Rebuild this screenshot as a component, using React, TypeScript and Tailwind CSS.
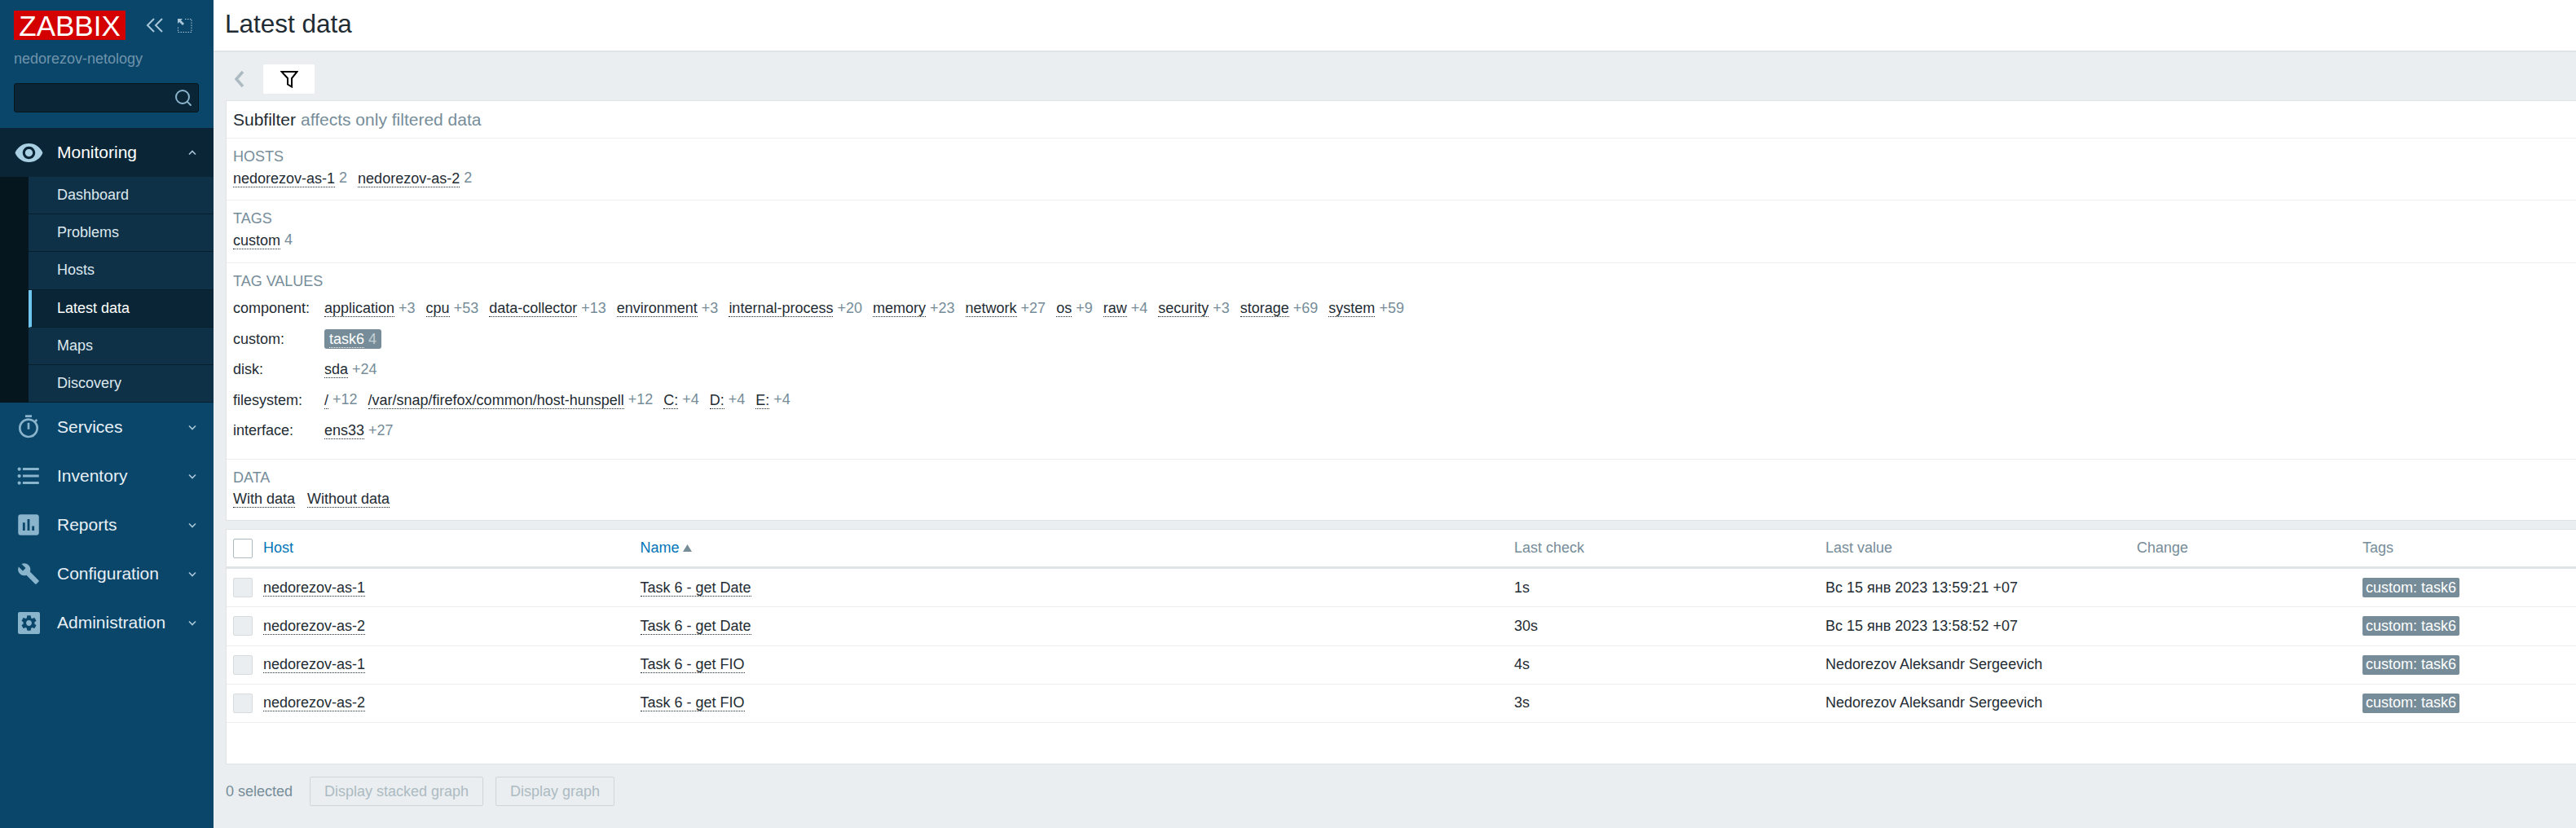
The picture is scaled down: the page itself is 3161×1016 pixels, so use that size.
import { Search } from "lucide-react";
import type { ReactNode } from "react";
import {
  MdAssessment,
  MdBuild,
  MdFormatListBulleted,
  MdOutlineTimer,
  MdRemoveRedEye,
  MdSettings,
} from "react-icons/md";

const submenu = ["Dashboard", "Problems", "Hosts", "Latest data", "Maps", "Discovery"];

const tagValues: { label: string; items: [string, string][] }[] = [
  {
    label: "component:",
    items: [
      ["application", "+3"],
      ["cpu", "+53"],
      ["data-collector", "+13"],
      ["environment", "+3"],
      ["internal-process", "+20"],
      ["memory", "+23"],
      ["network", "+27"],
      ["os", "+9"],
      ["raw", "+4"],
      ["security", "+3"],
      ["storage", "+69"],
      ["system", "+59"],
    ],
  },
  { label: "custom:", items: [] },
  { label: "disk:", items: [["sda", "+24"]] },
  {
    label: "filesystem:",
    items: [
      ["/", "+12"],
      ["/var/snap/firefox/common/host-hunspell", "+12"],
      ["C:", "+4"],
      ["D:", "+4"],
      ["E:", "+4"],
    ],
  },
  { label: "interface:", items: [["ens33", "+27"]] },
];

const rows = [
  ["nedorezov-as-1", "Task 6 - get Date", "1s", "Вс 15 янв 2023 13:59:21 +07"],
  ["nedorezov-as-2", "Task 6 - get Date", "30s", "Вс 15 янв 2023 13:58:52 +07"],
  ["nedorezov-as-1", "Task 6 - get FIO", "4s", "Nedorezov Aleksandr Sergeevich"],
  ["nedorezov-as-2", "Task 6 - get FIO", "3s", "Nedorezov Aleksandr Sergeevich"],
];

const gridCols = "grid grid-cols-[45px_462.5px_1072.5px_382px_382px_277px_1fr] items-center";

function Chevron({ up }: { up?: boolean }) {
  return (
    <svg width="10" height="7" viewBox="0 0 10 7" className="ml-auto mr-[21px]" fill="none" stroke="#a9c6d8" strokeWidth="1.6">
      <path d={up ? "M1 5.5 5 1.5 9 5.5" : "M1 1.5 5 5.5 9 1.5"} />
    </svg>
  );
}

function MenuRow({ icon, label, open }: { icon: ReactNode; label: string; open?: boolean }) {
  return (
    <div className={`flex h-[60px] items-center text-[21px] ${open ? "bg-[#0a2636] text-white" : "text-[#e8f0f5]"}`}>
      <div className={`flex w-[70px] justify-center ${open ? "text-[#a9cfe3]" : "text-[#8ab3cc]"}`}>{icon}</div>
      <span>{label}</span>
      <Chevron up={open} />
    </div>
  );
}

function Sub({ name, count }: { name: string; count: string }) {
  return (
    <span className="mr-[13px] inline-flex items-center gap-[5px] whitespace-nowrap">
      <span className="border-b border-dotted border-[#1f2c33] leading-[20px]">{name}</span>
      <span className="pb-px text-[#768d99]">{count}</span>
    </span>
  );
}

function Section({ title, children, h }: { title: string; children: ReactNode; h: string }) {
  return (
    <div className={`border-t border-[#ebeef0] px-[8px] pt-[11px] ${h}`}>
      <div className="flex h-[22px] items-center text-[#768d99]">{title}</div>
      {children}
    </div>
  );
}

export default function App() {
  return (
    <div className="flex h-screen overflow-hidden bg-[#ebeef0] text-[18px] text-[#1f2c33] [font-family:'Liberation_Sans',Arial,sans-serif]">
      <aside className="w-[262px] shrink-0 bg-[#0a466a]">
        <div className="h-[157px] px-[17px] pt-[13px]">
          <div className="flex items-center">
            <div className="flex h-[36px] w-[137px] items-center justify-center bg-[#d40000] text-[35px] leading-none text-white">ZABBIX</div>
            <svg width="22" height="18" viewBox="0 0 22 18" className="ml-[25px]" fill="none" stroke="#a9c6d8" strokeWidth="2">
              <path d="M10 1 2 9l8 8M20 1l-8 8 8 8" />
            </svg>
            <svg width="19" height="19" viewBox="0 0 19 19" className="ml-[16px]" fill="none" stroke="#a9c6d8">
              <path d="M10 1.5h8v16H1.5V10" strokeDasharray="1.5 1.5" />
              <path d="M1 1h6L5 3l4 4-2 2-4-4-2 2z" fill="#a9c6d8" stroke="none" />
            </svg>
          </div>
          <div className="mt-[11px] h-[24px] leading-[24px] text-[#6f93aa]">nedorezov-netology</div>
          <div className="mt-[18px] flex h-[36px] w-[227px] items-center justify-end rounded-[3px] border border-[#05161f] bg-[#0a2636] pr-[6px]">
            <Search size={24} strokeWidth={2} className="text-[#8ab3cc]" />
          </div>
        </div>
        <MenuRow icon={<MdRemoveRedEye size={37} />} label="Monitoring" open />
        <div className="bg-[#05161f] pl-[35px]">
          {submenu.map((item) => {
            const active = item === "Latest data";
            return (
              <div
                key={item}
                className={`flex h-[46.2px] items-center border-b border-[#071e2c] text-[18px] ${
                  active ? "border-l-[4px] border-l-[#6ec5ee] bg-[#0a2636] pl-[31px] text-white" : "bg-[#0f3148] pl-[35px] text-[#dde8ee]"
                }`}
              >
                {item}
              </div>
            );
          })}
        </div>
        <MenuRow icon={<MdOutlineTimer size={32} />} label="Services" />
        <MenuRow icon={<MdFormatListBulleted size={34} />} label="Inventory" />
        <MenuRow icon={<MdAssessment size={34} />} label="Reports" />
        <MenuRow icon={<MdBuild size={28} />} label="Configuration" />
        <MenuRow
          icon={
            <div className="flex h-[27px] w-[27px] items-center justify-center rounded-[2px] bg-[#8ab3cc] text-[#0a466a]">
              <MdSettings size={23} />
            </div>
          }
          label="Administration"
        />
      </aside>

      <main className="min-w-0 flex-1">
        <header className="flex h-[64px] items-center border-b-2 border-[#dfe4e7] bg-white pb-[2px] pl-[14px]">
          <h1 className="text-[31.5px] leading-none">Latest data</h1>
        </header>

        <div className="pl-[15px]">
          <div className="flex h-[59px] items-start pt-[15px]">
            <svg width="14" height="22" viewBox="0 0 14 22" className="ml-[10px] mt-[7px]" fill="none" stroke="#acbbc2" strokeWidth="3.5">
              <path d="M11 2 3 11l8 9" />
            </svg>
            <div className="ml-[22px] flex h-[36px] w-[63px] items-center justify-center rounded-[2px] bg-white">
              <svg width="22" height="22" viewBox="0 0 22 22" fill="none" stroke="#000" strokeWidth="2">
                <path d="M1.5 2h19L14 10v10.5l-5-3V10z" />
              </svg>
            </div>
          </div>

          <section className="h-[516px] border border-r-0 border-[#dfe4e7] bg-white">
            <div className="flex h-[45px] items-center whitespace-nowrap px-[8px] text-[21px]">
              Subfilter
              <span className="ml-[6px] text-[#768d99]">affects only filtered data</span>
            </div>
            <Section title="HOSTS" h="h-[76px]">
              <div className="mt-[2px]">
                <Sub name="nedorezov-as-1" count="2" />
                <Sub name="nedorezov-as-2" count="2" />
              </div>
            </Section>
            <Section title="TAGS" h="h-[77px]">
              <div className="mt-[2px]">
                <Sub name="custom" count="4" />
              </div>
            </Section>
            <Section title="TAG VALUES" h="h-[241px]">
              <div className="mt-[4px]">
                {tagValues.map((row) => (
                  <div key={row.label} className="flex h-[37.5px] items-center">
                    <div className="w-[112px] shrink-0">{row.label}</div>
                    {row.items.map(([name, count]) => (
                      <Sub key={name} name={name} count={count} />
                    ))}
                    {row.label === "custom:" && (
                      <span className="inline-flex h-[24px] items-center gap-[5px] rounded-[3px] bg-[#768d99] px-[6px] text-white">
                        <span className="border-b border-dotted border-white leading-[20px]">task6</span>
                        <span className="text-[#c4cfd5]">4</span>
                      </span>
                    )}
                  </div>
                ))}
              </div>
            </Section>
            <Section title="DATA" h="h-[75px]">
              <div className="mt-[2px]">
                <span className="mr-[15px] inline-block border-b border-dotted border-[#1f2c33] leading-[20px]">With data</span>
                <span className="inline-block border-b border-dotted border-[#1f2c33] leading-[20px]">Without data</span>
              </div>
            </Section>
          </section>

          <section className="mt-[10px] h-[289px] border border-r-0 border-[#dfe4e7] bg-white">
            <div className={`${gridCols} h-[48px] border-b-[3px] border-[#dfe4e7] text-[#768d99]`}>
              <div className="pl-[8px]">
                <div className="h-[24px] w-[24px] rounded-[2px] border border-[#acbbc2] bg-white" />
              </div>
              <span className="text-[#0275b8]">Host</span>
              <span className="flex items-center gap-[4px] text-[#0275b8]">
                Name
                <svg width="11" height="9" viewBox="0 0 11 9" fill="#768d99">
                  <path d="M5.5 0 11 9H0z" />
                </svg>
              </span>
              <span>Last check</span>
              <span>Last value</span>
              <span>Change</span>
              <span>Tags</span>
            </div>
            {rows.map(([host, name, check, value], i) => (
              <div key={i} className={`${gridCols} h-[47.25px] border-b border-[#ebeef0]`}>
                <div className="pl-[8px]">
                  <div className="h-[24px] w-[24px] rounded-[2px] border border-[#d5dbde] bg-[#ebeef0]" />
                </div>
                <span>
                  <span className="inline-block border-b border-dotted border-[#1f2c33] leading-[20px]">{host}</span>
                </span>
                <span>
                  <span className="inline-block border-b border-dotted border-[#1f2c33] leading-[20px]">{name}</span>
                </span>
                <span>{check}</span>
                <span>{value}</span>
                <span />
                <span className="inline-flex h-[24px] w-[119px] items-center justify-center whitespace-nowrap rounded-[2px] bg-[#768d99] text-white">custom: task6</span>
              </div>
            ))}
          </section>

          <div className="mt-[15px] flex items-center">
            <span className="text-[#768d99]">0 selected</span>
            <button type="button" className="ml-[21px] h-[36px] w-[213px] rounded-[2px] border border-[#cfd6da] bg-[#ebeef0] text-[#acbbc2]">
              Display stacked graph
            </button>
            <button type="button" className="ml-[15px] h-[36px] w-[146px] rounded-[2px] border border-[#cfd6da] bg-[#ebeef0] text-[#acbbc2]">
              Display graph
            </button>
          </div>
        </div>
      </main>
    </div>
  );
}
